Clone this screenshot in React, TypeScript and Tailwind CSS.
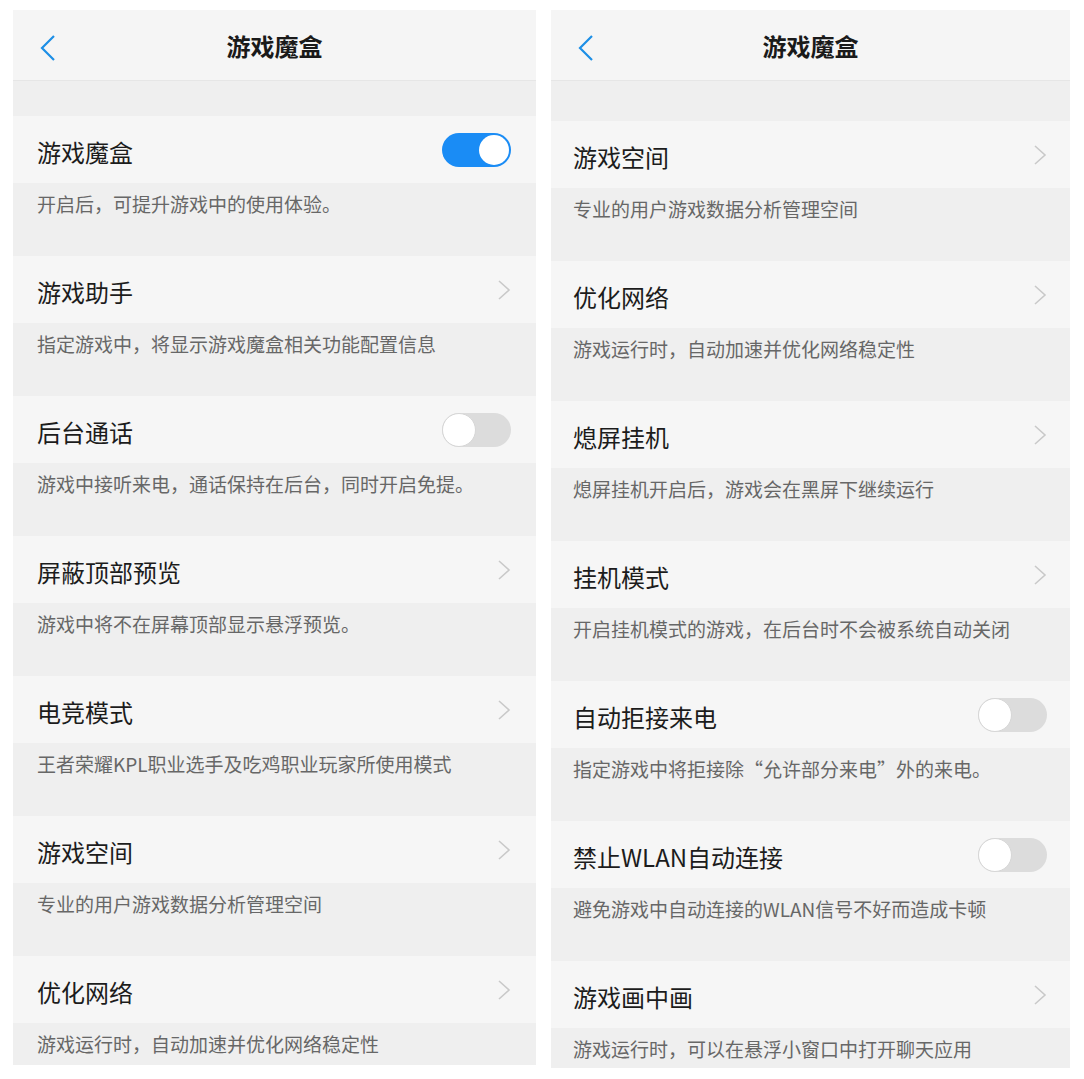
import React from "react";

type Item = {
  title: string;
  desc: string;
  kind: "on" | "off" | "link";
};

const leftItems: Item[] = [
  { title: "游戏魔盒", desc: "开启后，可提升游戏中的使用体验。", kind: "on" },
  { title: "游戏助手", desc: "指定游戏中，将显示游戏魔盒相关功能配置信息", kind: "link" },
  { title: "后台通话", desc: "游戏中接听来电，通话保持在后台，同时开启免提。", kind: "off" },
  { title: "屏蔽顶部预览", desc: "游戏中将不在屏幕顶部显示悬浮预览。", kind: "link" },
  { title: "电竞模式", desc: "王者荣耀KPL职业选手及吃鸡职业玩家所使用模式", kind: "link" },
  { title: "游戏空间", desc: "专业的用户游戏数据分析管理空间", kind: "link" },
  { title: "优化网络", desc: "游戏运行时，自动加速并优化网络稳定性", kind: "link" },
];

const rightItems: Item[] = [
  { title: "游戏空间", desc: "专业的用户游戏数据分析管理空间", kind: "link" },
  { title: "优化网络", desc: "游戏运行时，自动加速并优化网络稳定性", kind: "link" },
  { title: "熄屏挂机", desc: "熄屏挂机开启后，游戏会在黑屏下继续运行", kind: "link" },
  { title: "挂机模式", desc: "开启挂机模式的游戏，在后台时不会被系统自动关闭", kind: "link" },
  { title: "自动拒接来电", desc: "指定游戏中将拒接除“允许部分来电”外的来电。", kind: "off" },
  { title: "禁止WLAN自动连接", desc: "避免游戏中自动连接的WLAN信号不好而造成卡顿", kind: "off" },
  { title: "游戏画中画", desc: "游戏运行时，可以在悬浮小窗口中打开聊天应用", kind: "link" },
];

function Toggle({ on }: { on: boolean }) {
  if (on) {
    return (
      <div className="flex h-[34px] w-[69px] items-center justify-end rounded-full bg-[#1a8cf5] px-[2px]">
        <div className="h-[30px] w-[30px] rounded-full bg-white" />
      </div>
    );
  }
  return (
    <div className="flex h-[34px] w-[69px] items-center rounded-full bg-[#dcdcdc]">
      <div className="h-[34px] w-[34px] rounded-full border-[1.5px] border-[#d6d6d6] bg-white" />
    </div>
  );
}

function Chevron() {
  return (
    <svg width="14" height="22" viewBox="0 0 14 22">
      <polyline points="2,2 12,11 2,20" fill="none" stroke="#c9c9c9" strokeWidth="1.6" />
    </svg>
  );
}

function Row({ item, pad }: { item: Item; pad: string }) {
  return (
    <div>
      <div className={`flex h-[67px] items-center justify-between bg-[#f6f6f6] ${pad}`}>
        <span className="pt-[4px] text-[24px] leading-[30px] text-[#1c1c1c]">{item.title}</span>
        {item.kind === "link" ? <Chevron /> : <Toggle on={item.kind === "on"} />}
      </div>
      <div className={`h-[73px] bg-[#efefef] pt-[8px] ${pad}`}>
        <span className="text-[19px] leading-[26px] text-[#676767]">{item.desc}</span>
      </div>
    </div>
  );
}

function Panel({
  items,
  gap,
  height,
  width,
  pad,
}: {
  items: Item[];
  gap: string;
  height: string;
  width: string;
  pad: string;
}) {
  return (
    <div className={`flex flex-col overflow-hidden bg-[#efefef] ${height} ${width}`}>
      <div className="relative flex h-[71px] shrink-0 items-center justify-center border-b border-[#e6e6e6] bg-[#f5f5f5]">
        <svg width="18" height="28" viewBox="0 0 18 28" className="absolute left-[26px] top-[24px]">
          <polyline points="15,2 3,14 15,26" fill="none" stroke="#1d8fe6" strokeWidth="2.2" />
        </svg>
        <span className="pt-[2px] text-[24px] font-bold text-[#1a1a1a]">游戏魔盒</span>
      </div>
      <div className={`shrink-0 ${gap}`} />
      {items.map((item, i) => (
        <Row key={i} item={item} pad={pad} />
      ))}
    </div>
  );
}

export default function App() {
  return (
    <div
      className="flex h-[1079px] w-[1084px] items-start gap-[15px] overflow-hidden bg-white pl-[13px] pt-[10px]"
      style={{ fontFamily: '"Noto Sans CJK SC", "Noto Sans", sans-serif' }}
    >
      <Panel items={leftItems} gap="h-[35px]" height="h-[1055px]" width="w-[523px]" pad="pl-[24px] pr-[25px]" />
      <Panel items={rightItems} gap="h-[40px]" height="h-[1058px]" width="w-[519px]" pad="pl-[22px] pr-[23px]" />
    </div>
  );
}
